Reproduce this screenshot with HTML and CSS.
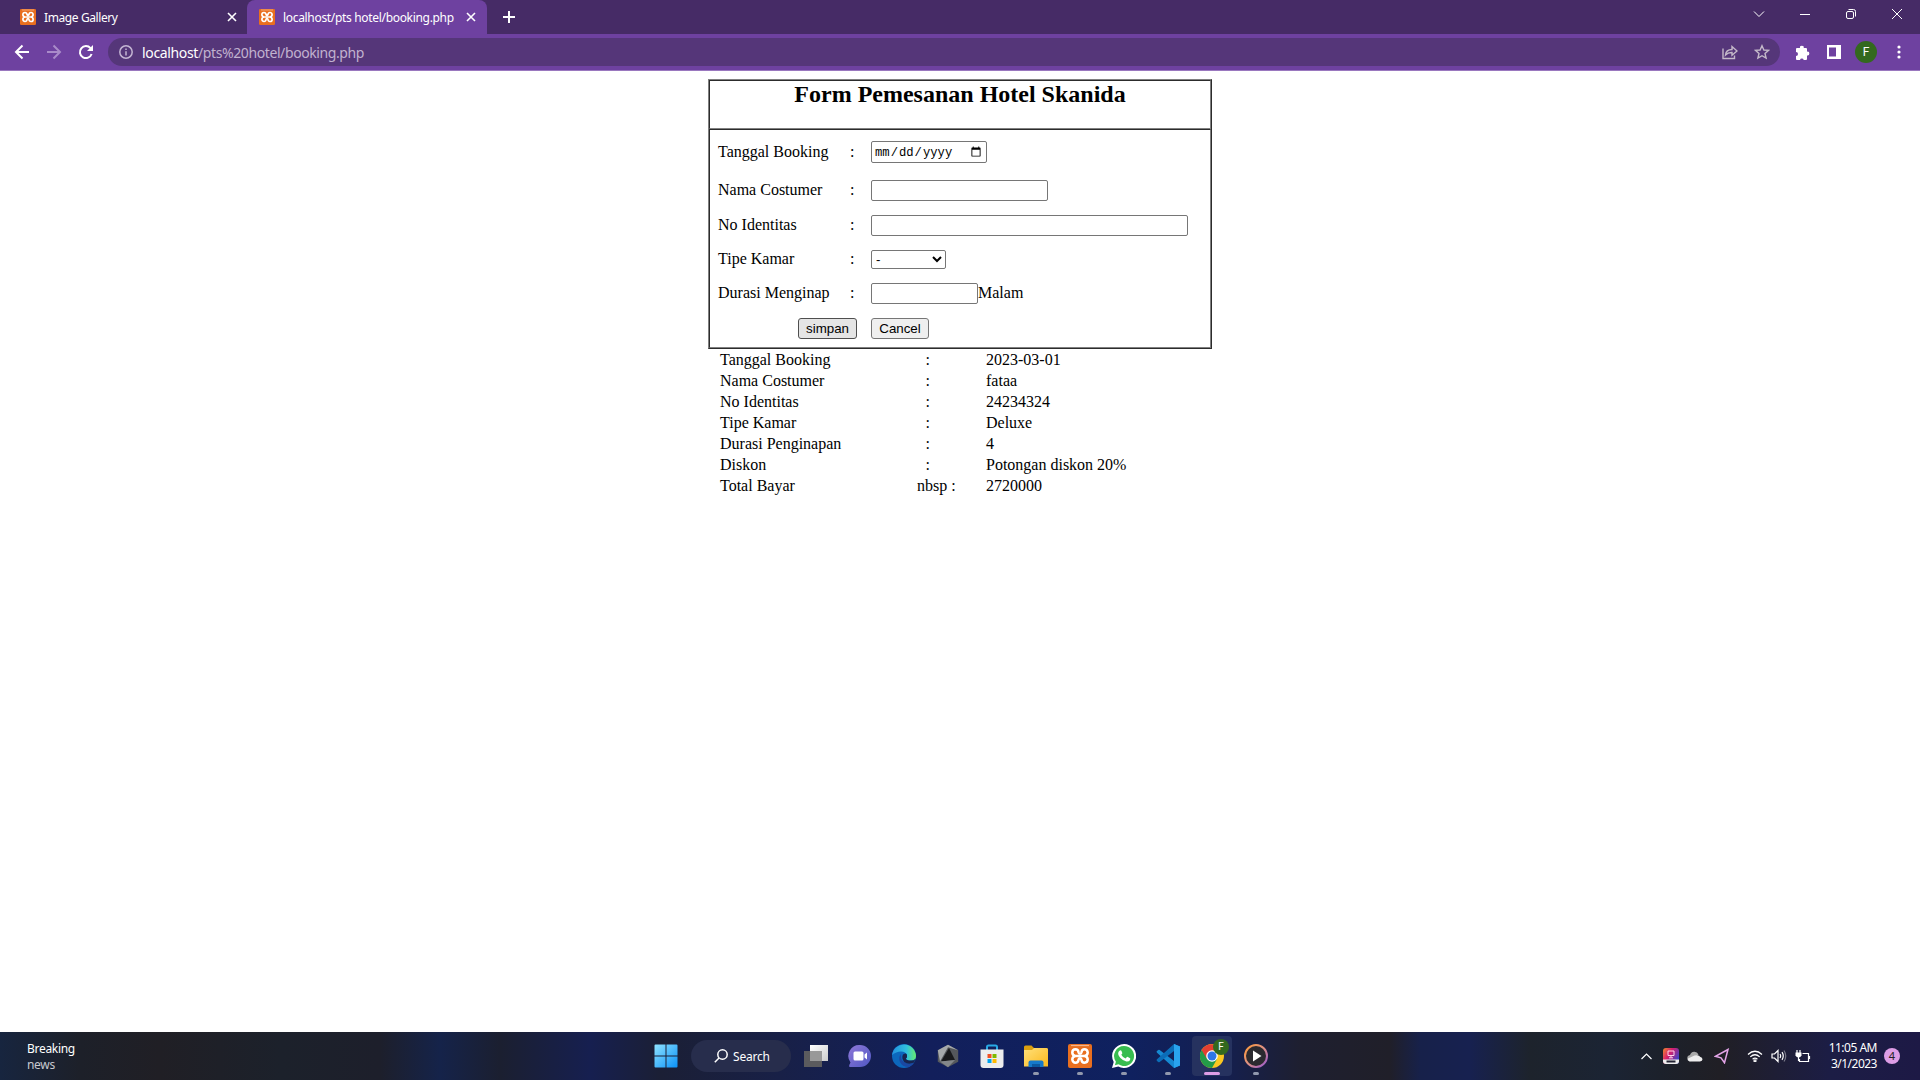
FILE: index.html
```html
<!DOCTYPE html>
<html lang="id">
<head>
<meta charset="utf-8">
<title>localhost/pts hotel/booking.php</title>
<link rel="stylesheet" href="styles.css">
</head>
<body>
<svg class="defs" width="0" height="0" aria-hidden="true">
  <symbol id="xampp" viewBox="0 0 24 24">
    <rect width="24" height="24" rx="2" fill="#e96f1f"/>
    <path d="M3 1.500h18" stroke="#f6b58a" stroke-width="1.200"/>
    <path d="M7.500 12Q4.300 11.400 4.300 8.400T7.500 5.300Q10.200 5.300 10.500 8.200Q10.700 9.600 12 9.600T13.500 8.200Q13.800 5.300 16.500 5.300T19.700 8.400Q19.700 11.400 16.500 12Q19.700 12.600 19.700 15.600T16.500 18.700Q13.800 18.700 13.500 15.800Q13.300 14.400 12 14.400T10.500 15.800Q10.200 18.700 7.500 18.700T4.300 15.600Q4.300 12.600 7.500 12zM8 12h8" fill="none" stroke="#fff" stroke-width="2.500" stroke-linejoin="round"/>
  </symbol>
</svg>
<header class="tabs">
  <div class="tab">
    <svg class="fav"><use href="#xampp"/></svg><span class="tab-name">Image Gallery</span>
    <svg class="x" viewBox="0 0 10 10"><path d="M1 1l8 8M9 1L1 9"/></svg>
  </div>
  <div class="tab active">
    <svg class="fav"><use href="#xampp"/></svg><span class="tab-name">localhost/pts hotel/booking.php</span>
    <svg class="x" viewBox="0 0 10 10"><path d="M1 1l8 8M9 1L1 9"/></svg>
  </div>
  <svg class="plus" viewBox="0 0 12 12"><path d="M6 0v12M0 6h12"/></svg>
  <div class="window-buttons">
    <svg viewBox="0 0 12 12"><path d="M1 3.500l5 5 5-5"/></svg>
    <svg viewBox="0 0 12 12"><path d="M1 6.500h10"/></svg>
    <svg viewBox="0 0 12 12"><rect x="1.500" y="3.500" width="7" height="7" rx="1.500"/><path d="M3.500 1.500h5q2 0 2 2v5"/></svg>
    <svg viewBox="0 0 12 12"><path d="M1 1l10 10M11 1L1 11"/></svg>
  </div>
</header>
<nav class="toolbar">
  <svg class="nav-icon" viewBox="0 0 16 16"><path d="M15 8H2M8.500 1.500L2 8l6.500 6.500"/></svg>
  <svg class="nav-icon dim" viewBox="0 0 16 16"><path d="M1 8h13M7.500 1.500L14 8l-6.500 6.500"/></svg>
  <svg class="nav-icon" viewBox="0 0 16 16"><path d="M13.600 10A6 6 0 1 1 12.500 4.200"/><path d="M15 1v6H9z" fill="#fff" stroke="none"/></svg>
  <div class="address">
    <svg class="info" viewBox="0 0 14 14"><circle cx="7" cy="7" r="6.200"/><path d="M7 6.200v4.300M7 3.500v1.500"/></svg>
    <span class="url"><b>localhost</b>/pts%20hotel/booking.php</span>
    <svg class="share" viewBox="0 0 16 16"><path d="M1 4.500v10h11.500v-3M3.500 11q.5-5.500 6.500-5.500V2.500L15 7l-5 4.300V8.500Q6 8.300 3.500 11z"/></svg>
    <svg class="star" viewBox="0 0 16 16"><path d="M8 1.700l1.900 4.300 4.700.4-3.600 3.100 1.100 4.600L8 11.700l-4.100 2.400L5 9.500 1.400 6.400l4.700-.4z"/></svg>
  </div>
  <svg class="puzzle" viewBox="0 0 15 15"><path d="M2 3h3a1.900 1.900 0 1 1 3.700 0H11q1 0 1 1v2.700a1.900 1.900 0 1 1 0 3.700V14q0 1-1 1H8.700a1.900 1.900 0 0 0-3.700 0H2q-1 0-1-1v-3a2 2 0 0 0 0-4V4q0-1 1-1z"/></svg>
  <svg class="panel" viewBox="0 0 14 14"><path d="M0 0h14v14H0zM2 2.500v9h7v-9z" fill-rule="evenodd"/></svg>
  <span class="avatar">F</span>
  <svg class="dots" viewBox="0 0 4 14"><circle cx="2" cy="2" r="1.600"/><circle cx="2" cy="7" r="1.600"/><circle cx="2" cy="12" r="1.600"/></svg>
</nav>
<main class="page">
  <form class="booking">
    <h2 class="title">Form Pemesanan Hotel Skanida</h2>
    <div class="fields">
      <label>Tanggal Booking</label><span>:</span><div><input class="date" type="date"></div>
      <label>Nama Costumer</label><span>:</span><div><input class="name" type="text"></div>
      <label>No Identitas</label><span>:</span><div><input class="ident" type="text"></div>
      <label>Tipe Kamar</label><span>:</span><div><select class="room"><option>-</option></select></div>
      <label>Durasi Menginap</label><span>:</span><div><input class="nights" type="text">Malam</div>
      <div class="submit"><button class="save" type="button">simpan</button></div><div><button class="cancel" type="button">Cancel</button></div>
    </div>
  </form>
  <div class="result">
    <span>Tanggal Booking</span><span class="colon">:</span><span>2023-03-01</span>
    <span>Nama Costumer</span><span class="colon">:</span><span>fataa</span>
    <span>No Identitas</span><span class="colon">:</span><span>24234324</span>
    <span>Tipe Kamar</span><span class="colon">:</span><span>Deluxe</span>
    <span>Durasi Penginapan</span><span class="colon">:</span><span>4</span>
    <span>Diskon</span><span class="colon">:</span><span>Potongan diskon 20%</span>
    <span>Total Bayar</span><span>nbsp :</span><span>2720000</span>
  </div>
</main>
<footer class="taskbar">
  <div class="news"><span>Breaking</span><span class="sub">news</span></div>
  <div class="apps">
    <div class="app"><svg viewBox="0 0 24 24"><defs><linearGradient id="win" x2="1" y2="1"><stop stop-color="#8fe3ff"/><stop offset="1" stop-color="#0a91f7"/></linearGradient></defs><path fill="url(#win)" d="M.5 1.500q0-1 1-1H11.500v11H.5zM12.500.5h10q1 0 1 1v10h-11zM.5 12.500h11v11h-10q-1 0-1-1zM12.500 12.500h11v10q0 1-1 1h-10z"/></svg></div>
    <div class="search"><svg viewBox="0 0 14 14"><circle cx="8.500" cy="5.500" r="4.700"/><path d="M5 9L.8 13.200"/></svg>Search</div>
    <div class="app"><svg viewBox="0 0 24 24"><defs><linearGradient id="tv" x2="1" y2="1"><stop stop-color="#fff"/><stop offset="1" stop-color="#ccc"/></linearGradient></defs><rect x="6" y="1" width="18" height="16" fill="url(#tv)"/><rect y="7" width="18" height="16" fill="#5b5b5e"/><rect x="6" y="7" width="12" height="10" fill="#999"/></svg></div>
    <div class="app"><svg viewBox="0 0 24 24"><defs><linearGradient id="chat" x2="1" y2="1"><stop stop-color="#8f78d8"/><stop offset="1" stop-color="#4f58c4"/></linearGradient></defs><path fill="url(#chat)" d="M12 1a11 11 0 1 1 0 22H1.500q-1-1 1-4.500A11 11 0 0 1 12 1z"/><rect x="5.500" y="7.500" width="10" height="9" rx="1.500" fill="#fff"/><path d="M16.500 10.500l2.500-2v7l-2.500-2z" fill="#fff"/></svg></div>
    <div class="app"><svg viewBox="0 0 24 24"><defs><linearGradient id="edge" x2="1"><stop stop-color="#2390de"/><stop offset=".6" stop-color="#30bfe0"/><stop offset="1" stop-color="#66eb6e"/></linearGradient></defs><circle cx="12" cy="12" r="12" fill="#0c67bd"/><path d="M.1 11A12 12 0 0 1 24 12q0 4.500-4.800 4.500-5.200 0-5.200-2 1.500-1 1-3Q14 7.500 9 7.500T.1 11z" fill="url(#edge)"/><path d="M9 10q-3 3-1 8t9 5q3-1 5-4.500-6 2.500-10-.5T9 10z" fill="#1b48a3"/><path d="M14 14.500q0 2 5.200 2 3 0 4-1.500l-1 3.500q-6 2.500-10-.5-3-4-1.200-7.500Q15 8 15 11.500q.5 2-1 3z" fill="#18244f"/></svg></div>
    <div class="app"><svg viewBox="0 0 24 24"><path d="M12 .8l10.200 5.500v11.400L12 23.300 1.800 17.700V6.300z" fill="#55585c"/><path d="M12 .8l10.200 5.500L12 3.200 4 17.500 1.800 6.300z" fill="#a6a9ab"/><path d="M13 4l6 12-14 1.500z" fill="#191a1c"/><path d="M4 17.500l15-1.500-7 7.300z" fill="#83878a"/></svg></div>
    <div class="app"><svg viewBox="0 0 24 24"><path d="M7 6V3q0-1.500 1.500-1.500h7Q17 1.500 17 3v3" fill="none" stroke="#29a9e6" stroke-width="2"/><path d="M.5 5.500h23V21q0 3-3 3h-17q-3 0-3-3z" fill="#ededed"/><path d="M7.500 10h4v4h-4z" fill="#f25022"/><path d="M12.500 10h4v4h-4z" fill="#7fba00"/><path d="M7.500 15h4v4h-4z" fill="#00a4ef"/><path d="M12.500 15h4v4h-4z" fill="#ffb900"/></svg></div>
    <div class="app run"><svg viewBox="0 0 24 24"><defs><linearGradient id="fold" x2="1" y2="1"><stop stop-color="#ffe07a"/><stop offset="1" stop-color="#fbb81c"/></linearGradient></defs><path d="M0 3q0-1.500 1.500-1.500h6l2.500 2.500H22q2 0 2 2v5H0z" fill="#dca010"/><path d="M0 6h8l2-2h12.500Q24 4 24 5.500v17H0z" fill="url(#fold)"/><path d="M4.500 23v-4.500q0-2 2-2h11q2 0 2 2V23z" fill="#1679ca"/><path d="M8 20h8v3H8z" fill="#0c58a0"/></svg></div>
    <div class="app run"><svg><use href="#xampp"/></svg></div>
    <div class="app run"><svg viewBox="0 0 24 24"><path d="M12 0a12 12 0 1 1-5.700 22.500L0 24l1.700-6A12 12 0 0 1 12 0z" fill="#fff"/><path d="M12 2a10 10 0 1 1-5.500 18.300L2.900 21.200l1-3.500A10 10 0 0 1 12 2z" fill="#38bd4f"/><path d="M8 6.500q1-.5 1.500.5l.8 2q.2.7-1 1.800 1.500 2.800 4.300 3.800l1.300-1.500q.4-.4 1-.1l2.200 1.200q.5.500-.2 2-1 1.500-3.500 1.300-3.400-.7-6-3.500Q5.300 10.500 6.500 8q.6-1.300 1.500-1.500z" fill="#fff"/></svg></div>
    <div class="app run"><svg viewBox="0 0 24 24"><path d="M18 0l6 2.500v19L18 24 1 8.800q-1-1 0-1.800l1.200-1q.8-.5 1.500 0L18 17z" fill="#1689d2"/><path d="M18 0v7L3.700 18q-.8.5-1.500 0L1 17q-1-1 0-1.800z" fill="#0b6db8"/><path d="M18 0l6 2.500v19L18 24z" fill="#29a3ee"/></svg></div>
    <div class="app run current"><svg viewBox="0 0 24 24"><circle cx="12" cy="12" r="12" fill="#fbc821"/><path d="M12 12L1.600 6A12 12 0 0 0 12 24l5-9z" fill="#249b48"/><path d="M1.600 6A12 12 0 0 1 22.400 6.500H12L7 15z" fill="#e33f32"/><circle cx="12" cy="12" r="5.800" fill="#fff"/><circle cx="12" cy="12" r="4.500" fill="#2f76e8"/></svg><span class="badge">F</span></div>
    <div class="app run"><svg viewBox="0 0 24 24"><defs><linearGradient id="mp" x2="1" y2="1"><stop stop-color="#ff9b36"/><stop offset=".5" stop-color="#dc9086"/><stop offset="1" stop-color="#9556d0"/></linearGradient></defs><circle cx="12" cy="12" r="11" fill="#2b2a2f" stroke="url(#mp)" stroke-width="2"/><path d="M9 6.500l8.500 5.500L9 17.500z" fill="#fff"/></svg></div>
  </div>
  <div class="tray">
    <svg class="chev" viewBox="0 0 12 8"><path d="M1 7l5-5 5 5"/></svg>
    <svg class="rec" viewBox="0 0 16 16"><defs><linearGradient id="rec" x2="1" y2=".6"><stop stop-color="#f28b2e"/><stop offset=".45" stop-color="#d81d6c"/><stop offset="1" stop-color="#3d45c8"/></linearGradient></defs><rect width="16" height="16" rx="3" fill="url(#rec)"/><path d="M0 11.500h16V13q0 3-3 3H3q-3 0-3-3z" fill="#eee"/><path d="M5 3h6v4.500H5zM8 7.500v2M6 9.800h4" fill="none" stroke="#ffd5ea" stroke-width="1"/><path d="M3.500 13.500h9" stroke="#223" stroke-width="2"/></svg>
    <svg class="cloud" viewBox="0 0 16 11"><path d="M3.500 10.500a3.300 3.300 0 0 1 0-6.500A4.500 4.500 0 0 1 12 3.500z" fill="#aaa"/><path d="M4 10.500q-3-.5-2.500-3L8 4.500q5-1 5.500 1.200 2.500.5 2.500 2.500T13.500 10.500z" fill="#eee"/></svg>
    <svg class="loc" viewBox="0 0 16 16"><path d="M14 1.500L1.500 8.300l5.500 1.500 3.500 5z"/></svg>
    <svg class="wifi" viewBox="0 0 16 12"><path d="M1 4.500q7-6.500 14 0M3.300 6.900q4.700-4.300 9.400 0M5.600 9.200q2.400-2.200 4.800 0"/><circle cx="8" cy="10.800" r="1"/></svg>
    <svg class="vol" viewBox="0 0 16 14"><path d="M1 5h2.500L7 1.500v11L3.500 9H1zM9 5q1.300 2 0 4M11 3.200q2.500 3.800 0 7.600"/><path d="M13 1.500q3.500 5.500 0 11" opacity=".4"/></svg>
    <svg class="bat" viewBox="0 0 16 13"><path d="M7.500 3.500h6v8h-9V9M14.500 6v3"/><path d="M.5 2.500h6v3q-1 2-3 2t-3-2z" fill="#fff" stroke="none"/><path d="M2 0v3M5 0v3M3.500 7v4"/></svg>
    <div class="clock"><span>11:05 AM</span><span>3/1/2023</span></div>
    <span class="count">4</span>
  </div>
</footer>
</body>
</html>
```
FILE: styles.css
```css
* { box-sizing: border-box; }
body { margin: 0; width: 1920px; height: 1080px; display: flex; flex-direction: column; overflow: hidden; background: #fff; color: #000; }
svg { display: block; flex: none; }
.defs { position: absolute; }

.tabs { height: 34px; flex: none; display: flex; background: #462b66; font: 12px "Noto Sans", sans-serif; color: #fff; letter-spacing: -.2px; }
.tab { width: 240px; display: flex; align-items: center; padding: 0 11px 0 12px; }
.tab:first-child { width: 247px; padding-left: 20px; padding-right: 10px; letter-spacing: -.4px; }
.tab.active { background: #6e41a0; border-radius: 8px 8px 0 0; letter-spacing: -.32px; }
.fav { width: 16px; height: 16px; margin-right: 8px; }
.tab-name { flex: 1; white-space: nowrap; }
.x { width: 10px; height: 10px; fill: none; stroke: #fff; stroke-width: 1.6; }
.plus { width: 12px; height: 12px; margin: 11px 0 0 16px; stroke: #fff; stroke-width: 2; }
.window-buttons { margin-left: auto; display: flex; gap: 34px; padding: 8px 17px 0 0; }
.window-buttons svg { width: 12px; height: 12px; fill: none; stroke: #fff; stroke-width: 1; }

.toolbar { height: 37px; flex: none; display: flex; align-items: center; background: #6e41a0; border-bottom: 1px solid #9a78bf; padding-left: 14px; }
.nav-icon { width: 16px; height: 16px; margin-right: 16px; fill: none; stroke: #fff; stroke-width: 2; }
.nav-icon.dim { stroke: #a98bc9; }
.nav-icon:nth-child(3) { margin-right: 14px; }
.address { width: 1672px; height: 28px; border-radius: 14px; background: #553679; display: flex; align-items: center; padding: 0 10px 0 11px; }
.info { width: 14px; height: 14px; margin-right: 9px; fill: none; stroke: #c4b5d3; stroke-width: 1.5; }
.url { flex: 1; font: 14px "Noto Sans", sans-serif; letter-spacing: -.4px; color: #c1b2cf; }
.url b { font-weight: 400; letter-spacing: -.35px; color: #fff; }
.share, .star { width: 16px; height: 16px; fill: none; stroke: #c4b9c9; stroke-width: 1.4; margin-left: 16px; }
.puzzle { width: 15px; height: 15px; margin-left: 15px; fill: #fff; overflow: visible; }
.panel { width: 14px; height: 14px; margin-left: 17px; fill: #fff; }
.avatar { width: 22px; height: 22px; margin-left: 14px; border-radius: 50%; background: #33691e; color: #fff; font: 12px/22px Roboto, sans-serif; text-align: center; }
.dots { width: 4px; height: 14px; margin-left: 20px; fill: #fff; }

.page { flex: 1; padding-top: 8px; font: 16px "Liberation Serif", serif; }
.booking { width: 504px; height: 270px; margin: 0 auto; border: 1px outset gray; }
.title { height: 49px; margin: 0; border: 1px inset gray; font-size: 24px; line-height: 27px; text-align: center; }
.fields { height: 219px; border: 1px inset gray; padding: 2px 0 0 8px; display: grid; grid-template-columns: 132px 21px 1fr; grid-template-rows: 40px 36px 34px 34px 34px 36px; align-items: center; }
.fields div { display: flex; align-items: center; }
.fields .submit { grid-column: 1 / 3; justify-content: flex-end; padding-right: 14px; }
.fields input, .fields select { margin: 0; height: 21px; border: 1px solid #767676; border-radius: 2px; background: #fff; }
.fields .date { width: 116px; height: 22px; font: 12.2px "Liberation Mono", monospace; padding: 1px 2px 0; }
.name { width: 177px; }
.ident { width: 317px; }
.fields .room { width: 75px; height: 19px; font: 13.33px "Liberation Sans", sans-serif; }
.nights { width: 107px; }
.fields button { height: 21px; margin: 0; padding: 0; border: 1px solid #767676; border-radius: 3px; background: #efefef; font: 13.33px "Liberation Sans", sans-serif; color: #000; }
.fields .save { width: 59px; background: #e5e5e5; border-color: #4f4f4f; }
.fields .cancel { width: 58px; }
.result { width: 480px; margin: 1px auto 0; display: grid; grid-template-columns: 197px 69px 1fr; grid-auto-rows: 21px; line-height: 20px; white-space: nowrap; }
.result .colon { padding-left: 8.5px; }

.taskbar { height: 48px; flex: none; display: grid; grid-template-columns: 643px 1fr 300px; color: #fff; font: 12px "Noto Sans", sans-serif; background: linear-gradient(90deg, #17253f 0, #1d2029 80px, #201f25 160px, #1c212b 280px, #1d1f2b 380px, #15234a 440px, #1b1f30 500px, #161f50 590px, #1b1f35 660px, #182047 780px, #121f5b 930px, #0f215f 1130px, #141f51 1220px, #1e1f30 1300px, #201f29 1390px, #17214a 1420px, #172150 1470px, #1d232c 1530px, #1b2434 1610px, #1c212b 1660px, #201f25 1720px, #1c1d45 1830px, #1d1945 1920px); }
.news { padding: 9px 0 0 27px; display: flex; flex-direction: column; line-height: 16px; letter-spacing: -.3px; }
.news .sub { color: #c8c9cf; }
.apps { display: flex; align-items: center; }
.app { position: relative; width: 40px; height: 40px; margin: 0 2px; display: flex; align-items: center; justify-content: center; border-radius: 4px; }
.app:first-child { margin: 0 1px 0 3px; }
.app svg { width: 24px; height: 24px; }
.run::after { content: ""; position: absolute; left: 17px; bottom: 1px; width: 6px; height: 3px; border-radius: 2px; background: #9198ad; }
.current { background: #26325f; }
.current::after { left: 12px; width: 16px; background: #dd9de6; }
.badge { position: absolute; left: 21px; top: 3px; width: 16px; height: 16px; border-radius: 50%; background: #33691e; font: 10px/16px Roboto, sans-serif; text-align: center; }
.search { width: 100px; height: 32px; margin: 0 3px 0 4px; border-radius: 16px; background: #272d4c; display: flex; align-items: center; padding-left: 23px; gap: 5px; letter-spacing: -.2px; }
.search svg { width: 14px; height: 14px; fill: none; stroke: #fff; stroke-width: 1.5; }
.tray { display: flex; align-items: center; padding-left: 20px; }
.tray svg { fill: none; stroke: #fff; stroke-width: 1.2; }
.chev { width: 13px; height: 8px; }
.tray .rec { width: 16px; height: 16px; margin-left: 10px; stroke: none; }
.tray .cloud { width: 17px; height: 11px; margin-left: 7px; stroke: none; }
.tray .loc { width: 16px; height: 16px; margin-left: 11px; stroke: #e4a5e8; stroke-width: 1.5; }
.wifi { width: 16px; height: 12px; margin-left: 17px; }
.vol { width: 16px; height: 14px; margin-left: 8px; }
.bat { width: 16px; height: 13px; margin-left: 8px; }
.clock { width: 60px; margin-left: 6px; display: flex; flex-direction: column; align-items: flex-end; line-height: 16px; letter-spacing: -.5px; white-space: nowrap; }
.count { width: 16px; height: 16px; margin-left: 7px; border-radius: 50%; background: #dd9de6; color: #222; font-size: 11px; line-height: 16px; text-align: center; }
```
